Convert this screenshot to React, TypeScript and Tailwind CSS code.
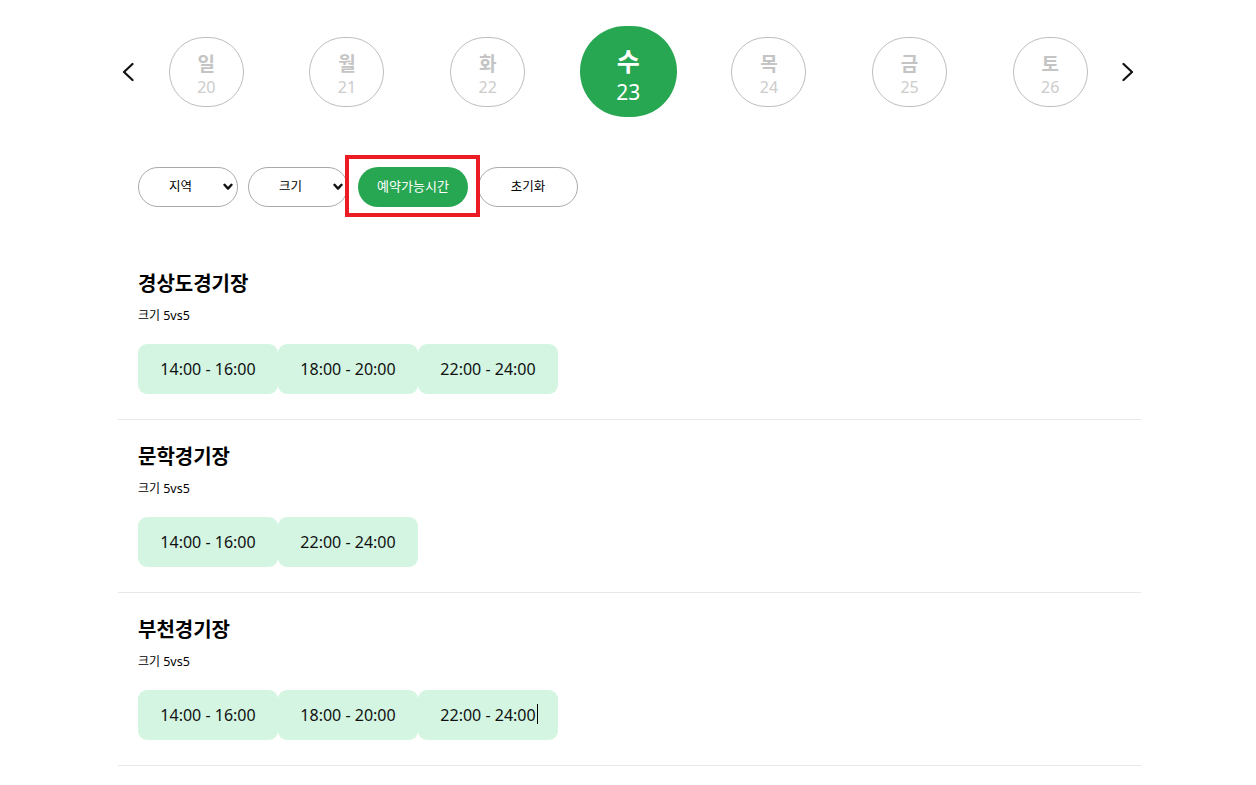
import React from "react";

const days = [
  { d: "일", n: 20 },
  { d: "월", n: 21 },
  { d: "화", n: 22 },
  { d: "수", n: 23, active: true },
  { d: "목", n: 24 },
  { d: "금", n: 25 },
  { d: "토", n: 26 },
];

const stadiums = [
  { name: "경상도경기장", slots: ["14:00 - 16:00", "18:00 - 20:00", "22:00 - 24:00"] },
  { name: "문학경기장", slots: ["14:00 - 16:00", "22:00 - 24:00"] },
  { name: "부천경기장", slots: ["14:00 - 16:00", "18:00 - 20:00", "22:00 - 24:00"], caret: true },
];

const font = { fontFamily: '"Noto Sans", "Noto Sans CJK KR", sans-serif' };

function ChevronL() {
  return (
    <svg width="12" height="20" viewBox="0 0 12 20" fill="none">
      <polyline points="10.5,2 2,10 10.5,18" stroke="#111" strokeWidth="2.2" strokeLinecap="round" strokeLinejoin="round" />
    </svg>
  );
}
function ChevronR() {
  return (
    <svg width="12" height="20" viewBox="0 0 12 20" fill="none">
      <polyline points="1.5,2 10,10 1.5,18" stroke="#111" strokeWidth="2.2" strokeLinecap="round" strokeLinejoin="round" />
    </svg>
  );
}
function ChevronDown() {
  return (
    <svg width="10" height="8" viewBox="0 0 10 8" fill="none">
      <polyline points="1.5,1.8 5,5.6 8.5,1.8" stroke="#111" strokeWidth="2.4" strokeLinecap="round" strokeLinejoin="round" />
    </svg>
  );
}

export default function App() {
  return (
    <div className="w-[1256px] min-h-[785px] bg-white text-black" style={font}>
      <div className="w-[1023px] ml-[118px]">
        {/* day selector */}
        <div className="flex items-center h-[91px] mt-[26px]">
          <div className="w-[18px] flex justify-center pl-[2px]">
            <ChevronL />
          </div>
          {days.map((x) => (
            <div key={x.n} className="w-[140.67px] flex justify-center items-center">
              {x.active ? (
                <div className="w-[97px] h-[91px] rounded-full bg-[#28a753] flex flex-col items-center justify-center text-white pt-[8px]">
                  <span className="text-[25px] font-bold leading-[30px]">{x.d}</span>
                  <span className="text-[21px] leading-[26px] mt-[3px]">{x.n}</span>
                </div>
              ) : (
                <div className="w-[75px] h-[70px] rounded-full border border-[#bdbdbd] flex flex-col items-center justify-center pt-[6px]">
                  <span className="text-[19px] font-bold leading-[24px] text-[#c4c4c4]">{x.d}</span>
                  <span className="text-[16px] leading-[20px] mt-[1px] text-[#cccccc]">{x.n}</span>
                </div>
              )}
            </div>
          ))}
          <div className="w-[15px] flex justify-center">
            <ChevronR />
          </div>
        </div>

        {/* filters */}
        <div className="flex items-center gap-[10px] mt-[50px] pl-[20px]">
          <div className="w-[100px] h-[40px] rounded-full border border-[#aaaaaa] flex items-center justify-between pl-[30px] pr-[4px] text-[12.5px]">
            <span>지역</span>
            <ChevronDown />
          </div>
          <div className="w-[100px] h-[40px] rounded-full border border-[#aaaaaa] flex items-center justify-between pl-[30px] pr-[4px] text-[12.5px]">
            <span>크기</span>
            <ChevronDown />
          </div>
          <div className="relative">
            <div className="w-[110px] h-[40px] rounded-full bg-[#28a753] text-white text-[13px] flex items-center justify-center">
              예약가능시간
            </div>
            <div className="absolute left-[-13px] right-[-12px] top-[-12px] bottom-[-10px] border-[4px] border-[#ec1c24] pointer-events-none" />
          </div>
          <div className="w-[100px] h-[40px] rounded-full border border-[#aaaaaa] flex items-center justify-center text-[12.5px]">
            초기화
          </div>
        </div>

        {/* stadium list */}
        <div className="mt-[40px]">
          {stadiums.map((s) => (
            <div key={s.name} className="border-b border-[#e8e8e8] pt-[23px] pb-[25px] px-[20px]">
              <div className="text-[20px] font-bold leading-[28px]">{s.name}</div>
              <div className="text-[12px] leading-[18px] mt-[9px]">
                크기 <span className="text-[12.5px]">5vs5</span>
              </div>
              <div className="flex mt-[19px]">
                {s.slots.map((t, i) => (
                  <div
                    key={t}
                    className="w-[140px] h-[50px] rounded-[9px] bg-[#d3f5e1] flex items-center justify-center text-[16px] text-[#111]"
                  >
                    <span className="relative">
                      {t}
                      {s.caret && i === s.slots.length - 1 && (
                        <span className="absolute right-[-2px] top-[1px] w-[1px] h-[20px] bg-black" />
                      )}
                    </span>
                  </div>
                ))}
              </div>
            </div>
          ))}
        </div>
      </div>
    </div>
  );
}
